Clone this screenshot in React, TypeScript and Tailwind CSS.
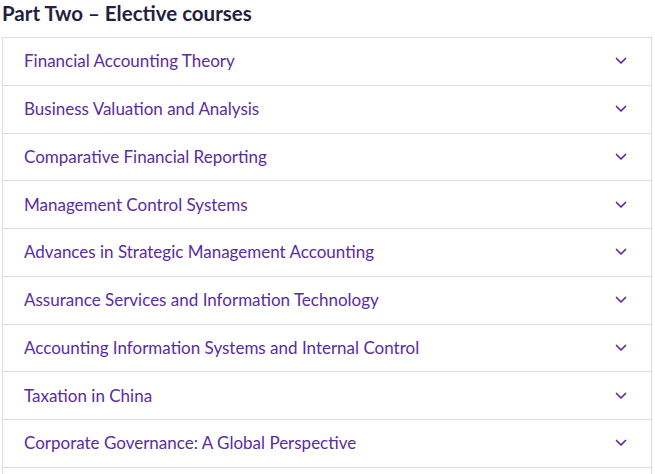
import React from "react";

const courses = [
  "Financial Accounting Theory",
  "Business Valuation and Analysis",
  "Comparative Financial Reporting",
  "Management Control Systems",
  "Advances in Strategic Management Accounting",
  "Assurance Services and Information Technology",
  "Accounting Information Systems and Internal Control",
  "Taxation in China",
  "Corporate Governance: A Global Perspective",
];

const Chevron = () => (
  <svg width="12" height="8" viewBox="0 0 12 8" fill="none" className="text-[#5b2ca0]">
    <path d="M1.5 1.5 6 6l4.5-4.5" stroke="currentColor" strokeWidth="1.7" strokeLinecap="round" strokeLinejoin="round" />
  </svg>
);

export default function App() {
  return (
    <div className="h-[474px] w-[655px] overflow-hidden bg-white font-['Lato',sans-serif]">
      <h2 className="h-[37px] pl-[2px] pt-[1px] text-[20.5px] font-bold leading-[24px] text-[#231f3f]">
        Part Two – Elective courses
      </h2>
      <div className="ml-[2px] w-[650px] border-l border-r border-[#dedde3]">
        {courses.map((c) => (
          <div
            key={c}
            className="flex h-[47.75px] items-center justify-between border-t border-[#dedde3] pl-[21px] pr-[24px]"
          >
            <span className="text-[17px] leading-[22px] text-[#5b2ca0]">{c}</span>
            <Chevron />
          </div>
        ))}
        <div className="h-[10px] border-t border-[#dedde3]" />
      </div>
    </div>
  );
}
